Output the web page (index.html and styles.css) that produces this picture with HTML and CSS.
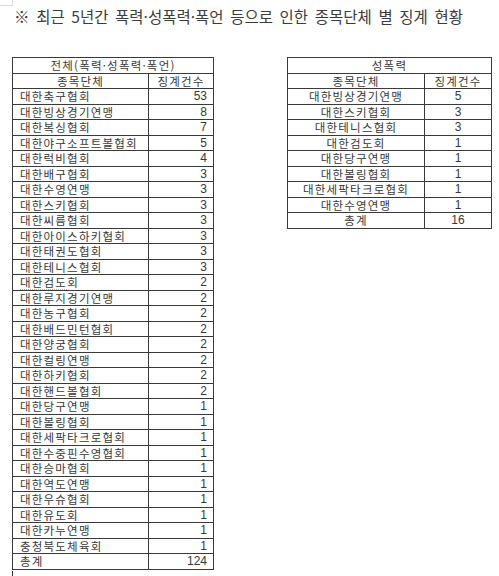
FILE: index.html
```html
<!DOCTYPE html>
<html lang="ko">
<head>
<meta charset="utf-8">
<title>종목단체 별 징계 현황</title>
<link rel="stylesheet" href="styles.css">
</head>
<body>
<div class="corner"></div>
<h1 class="title">※ 최근 5년간 폭력·성폭력·폭언 등으로 인한 종목단체 별 징계 현황</h1>
<div class="tables">
  <table class="tbl tbl-all">
    <colgroup><col class="c1"><col class="c2"></colgroup>
    <tr><td colspan="2" class="cap">전체(폭력·성폭력·폭언)</td></tr>
    <tr><td class="hd">종목단체</td><td class="hd">징계건수</td></tr>
    <tr><td>대한축구협회</td><td class="num">53</td></tr>
    <tr><td>대한빙상경기연맹</td><td class="num">8</td></tr>
    <tr><td>대한복싱협회</td><td class="num">7</td></tr>
    <tr><td>대한야구소프트볼협회</td><td class="num">5</td></tr>
    <tr><td>대한럭비협회</td><td class="num">4</td></tr>
    <tr><td>대한배구협회</td><td class="num">3</td></tr>
    <tr><td>대한수영연맹</td><td class="num">3</td></tr>
    <tr><td>대한스키협회</td><td class="num">3</td></tr>
    <tr><td>대한씨름협회</td><td class="num">3</td></tr>
    <tr><td>대한아이스하키협회</td><td class="num">3</td></tr>
    <tr><td>대한태권도협회</td><td class="num">3</td></tr>
    <tr><td>대한테니스협회</td><td class="num">3</td></tr>
    <tr><td><span class="spell">대한검도</span>회</td><td class="num">2</td></tr>
    <tr><td>대한루지경기연맹</td><td class="num">2</td></tr>
    <tr><td>대한농구협회</td><td class="num">2</td></tr>
    <tr><td>대한배드민턴협회</td><td class="num">2</td></tr>
    <tr><td>대한양궁협회</td><td class="num">2</td></tr>
    <tr><td>대한컬링연맹</td><td class="num">2</td></tr>
    <tr><td>대한하키협회</td><td class="num">2</td></tr>
    <tr><td>대한핸드볼협회</td><td class="num">2</td></tr>
    <tr><td>대한당구연맹</td><td class="num">1</td></tr>
    <tr><td>대한볼링협회</td><td class="num">1</td></tr>
    <tr><td>대한세팍타크로협회</td><td class="num">1</td></tr>
    <tr><td>대한수중핀수영협회</td><td class="num">1</td></tr>
    <tr><td>대한승마협회</td><td class="num">1</td></tr>
    <tr><td>대한역도연맹</td><td class="num">1</td></tr>
    <tr><td>대한우슈협회</td><td class="num">1</td></tr>
    <tr><td>대한유도회</td><td class="num">1</td></tr>
    <tr><td>대한카누연맹</td><td class="num">1</td></tr>
    <tr><td>충청북도체육회</td><td class="num">1</td></tr>
    <tr><td>총계</td><td class="num">124</td></tr>
  </table>
  <table class="tbl tbl-sex">
    <colgroup><col class="c1"><col class="c2"></colgroup>
    <tr><td colspan="2" class="cap">성폭력</td></tr>
    <tr><td class="hd">종목단체</td><td class="hd">징계건수</td></tr>
    <tr><td>대한빙상경기연맹</td><td class="num">5</td></tr>
    <tr><td>대한스키협회</td><td class="num">3</td></tr>
    <tr><td>대한테니스협회</td><td class="num">3</td></tr>
    <tr><td><span class="spell">대한검도</span>회</td><td class="num">1</td></tr>
    <tr><td>대한당구연맹</td><td class="num">1</td></tr>
    <tr><td>대한볼링협회</td><td class="num">1</td></tr>
    <tr><td>대한세팍타크로협회</td><td class="num">1</td></tr>
    <tr><td>대한수영연맹</td><td class="num">1</td></tr>
    <tr><td>총계</td><td class="num">16</td></tr>
  </table>
</div>
<div class="tail"></div>
</body>
</html>
```

FILE: styles.css
```css
html, body {
  margin: 0;
  padding: 0;
  background: #ffffff;
}
body {
  width: 499px;
  height: 576px;
  overflow: hidden;
  font-family: "Noto Sans CJK KR", "Liberation Sans", sans-serif;
  color: #2b2b2b;
}
.corner {
  width: 12px;
  height: 5px;
  border-right: 1px solid #dcdcdc;
  border-bottom: 1px solid #dcdcdc;
}
.title {
  margin: 1px 0 0 14px;
  font-size: 15.5px;
  font-weight: normal;
  line-height: 18px;
  word-spacing: 2.3px;
  color: #3c3c3c;
  white-space: nowrap;
}
.tables {
  display: flex;
  align-items: flex-start;
  margin-top: 32px;
  padding-left: 12px;
  gap: 73px;
}
.tbl {
  border-collapse: collapse;
  table-layout: fixed;
  font-size: 11.5px;
  letter-spacing: 1.2px;
  color: #383838;
}
.tbl td {
  border: 1px solid #3a3a3a;
  height: 14.5px;
  padding: 0 6px 0 7px;
  line-height: 14px;
  white-space: nowrap;
  overflow: hidden;
}
.tbl-all { width: 201px; }
.tbl-all .c1 { width: 136px; }
.tbl-all .c2 { width: 65px; }
.tbl-sex { width: 204px; }
.tbl-sex .c1 { width: 137px; }
.tbl-sex .c2 { width: 67px; }
.tbl td.cap, .tbl td.hd {
  text-align: center;
  padding: 0;
}
.tbl .num {
  font-family: "Liberation Sans", Arial, sans-serif;
  font-size: 12px;
  letter-spacing: 0;
  text-align: right;
}
.tbl-sex td {
  text-align: center;
  padding: 0;
}
.tbl-sex .num {
  text-align: center;
}
.spell {
  text-decoration: underline dotted #d8a46a;
  text-underline-offset: 2px;
}
.tail {
  margin: 1px 0 0 12px;
  width: 0;
  height: 10px;
  border-left: 1px solid #333;
}
```
